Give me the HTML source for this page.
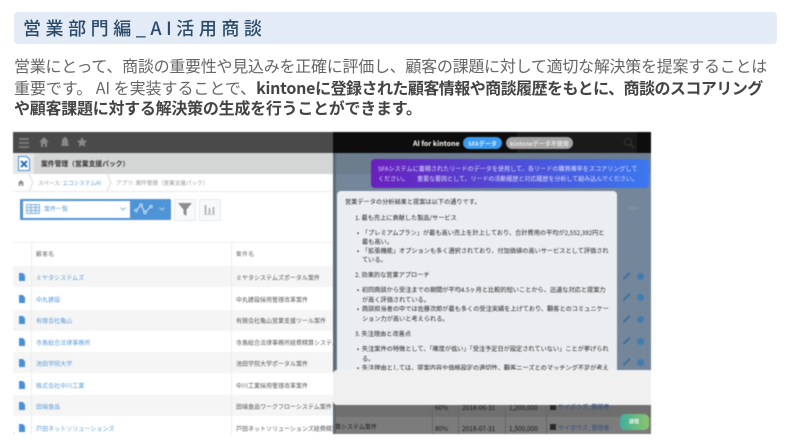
<!DOCTYPE html>
<html lang="ja"><head><meta charset="utf-8">
<style>
html,body{margin:0;padding:0;background:#fff;width:792px;height:440px;overflow:hidden}
body{position:relative;font-family:"Noto Sans CJK JP","Liberation Sans",sans-serif}
.a{position:absolute;white-space:nowrap}
.title{left:14px;top:12px;width:763px;height:32px;background:#e3ebf7;border-radius:4px}
.tt{left:23px;top:16px;font-size:18px;line-height:25px;letter-spacing:4.55px;color:#2b4a69;font-weight:500}
.p{left:14px;font-size:16px;line-height:22px;color:#666;letter-spacing:-.26px}
.p b{color:#444;font-weight:700}
#shot{position:absolute;left:13px;top:132px;width:638px;height:302px;overflow:hidden;background:#fff;filter:blur(.4px)}
#shot .a{line-height:10px}
#shot .a.c1,#shot .a.c2{line-height:11px}
#shot .a.card{line-height:12px}
.row{position:absolute;left:0;width:638px;height:21.4px}
.g{background:#f5f5f5}
.c1{left:23px;font-size:6px;color:#5a9bd8;letter-spacing:.05px}
.c2{left:223px;font-size:6px;color:#555}
.doc{position:absolute;left:6px;width:6px;height:8px;background:#4a90d6;clip-path:polygon(0 0,65% 0,100% 30%,100% 100%,0 100%)}
.card{font-size:6.2px;color:#222}
.ic{position:absolute;left:624px;width:7px;height:7px;border-radius:50%;background:#3f7cb5}
.pen{position:absolute;left:609px;width:9px;height:1.8px;background:#3f6f9c;transform:rotate(-45deg)}
</style></head><body>
<div class="a title"></div>
<div class="a tt">営業部門編_AI活用商談</div>
<div class="a p" style="top:54px">営業にとって、商談の重要性や見込みを正確に評価し、顧客の課題に対して適切な解決策を提案することは</div>
<div class="a p" style="top:76px"><span style="letter-spacing:-.04px">重要です。 AI を実装することで、</span><b>kintone<span style="letter-spacing:-.54px">に登録された顧客情報や商談履歴をもとに、商談のスコアリング</span></b></div>
<div class="a p" style="top:96px"><b>や顧客課題に対する解決策の生成を行うことができます。</b></div>
<div class="a" style="left:13px;top:432px;width:2px;height:2px;background:#aaa"></div>

<div id="shot">
 <div class="a" style="left:0;top:0;width:638px;height:21px;background:#4a4a4a"></div>
 <div class="a" style="left:6px;top:6px;width:10px;height:1.5px;background:#777"></div>
 <div class="a" style="left:6px;top:10px;width:10px;height:1.5px;background:#777"></div>
 <div class="a" style="left:6px;top:14px;width:10px;height:1.5px;background:#777"></div>
 <svg class="a" style="left:26px;top:4px" width="68" height="13" viewBox="0 0 68 13"><path d="M0 6 5 1l5 5H8v5H6V8H4v3H2V6z" fill="#888"/><path d="M22 10c1-2 1-3 1-5s2-4 3-4 3 2 3 4 0 3 1 5z" fill="#888"/><path d="M43 1l1.600 3.400 3.700.4-2.800 2.500.8 3.700L43 9l-3.300 2 .8-3.700-2.800-2.500 3.700-.4z" fill="#888"/></svg>

 <div class="a" style="left:0;top:21px;width:638px;height:21px;background:#d4d5d5"></div>
 <div class="a" style="left:0;top:21px;width:21px;height:21px;background:#e6e7e7"></div>
 <svg class="a" style="left:5px;top:24px" width="12" height="15" viewBox="0 0 12 15"><path d="M.5.500h8l3 3v11H.5z" fill="#fff" stroke="#4a90d6"/><path d="M3 5l6 6M9 5l-6 6" stroke="#2f6fb5" stroke-width="2"/></svg>
 <div class="a" style="left:28px;top:26px;font-size:6.800px;font-weight:700;color:#333">案件管理（営業支援パック）</div>

 <div class="a" style="left:0;top:59px;width:638px;height:1px;background:#e8eaea"></div>
 <svg class="a" style="left:5px;top:48px" width="6" height="6" viewBox="0 0 8 8"><path d="M0 4l4-4 4 4H7v4H5V5H3v3H1V4z" fill="#888"/></svg>
 <svg class="a" style="left:15px;top:42px" width="100" height="17" viewBox="0 0 100 17"><path d="M1 0l4 8.500-4 8.500M79 0l4 8.500-4 8.500" fill="none" stroke="#ddd"/></svg>
 <div class="a" style="left:25px;top:46px;font-size:5.600px;color:#999">スペース: <span style="color:#5a9bd8">エコシステムAI</span></div>
 <div class="a" style="left:103px;top:46px;font-size:5.600px;color:#999">アプリ: 案件管理（営業支援パック）</div>

 <div class="a" style="left:7px;top:67px;width:151px;height:21px;background:#4f94d6;border-radius:1px"></div>
 <div class="a" style="left:10px;top:69px;width:107px;height:17px;background:#fff"></div>
 <svg class="a" style="left:13px;top:72px" width="14" height="10" viewBox="0 0 14 10"><path d="M.5.500h13v9H.5zM.5 3.500h13M.5 6.500h13M5 .5v9M9.500.5v9" fill="#eaf2fa" stroke="#6aa3da" stroke-width=".7"/></svg>
 <div class="a" style="left:31px;top:72px;font-size:6px;color:#5a9bd8">案件一覧</div>
 <svg class="a" style="left:107px;top:75px" width="6" height="4" viewBox="0 0 6 4"><path d="M.5.500 3 3l2.500-2.500" fill="none" stroke="#8ab6e2"/></svg>
 <svg class="a" style="left:121px;top:71px" width="20" height="12" viewBox="0 0 20 12"><path d="M2 7.500 7 2l4 7.500 6-6" fill="none" stroke="#fff" stroke-width=".8"/><circle cx="2" cy="7.500" r="1.300" fill="#4f94d6" stroke="#fff" stroke-width=".7"/><circle cx="7" cy="2" r="1.300" fill="#4f94d6" stroke="#fff" stroke-width=".7"/><circle cx="11" cy="9.500" r="1.300" fill="#4f94d6" stroke="#fff" stroke-width=".7"/><circle cx="17" cy="3.500" r="1.300" fill="#4f94d6" stroke="#fff" stroke-width=".7"/></svg>
 <svg class="a" style="left:146px;top:75px" width="6" height="4" viewBox="0 0 6 4"><path d="M.5.500 3 3l2.500-2.500" fill="none" stroke="#b5d3ef"/></svg>
 <div class="a" style="left:161px;top:67px;width:20px;height:20px;background:#f7f9fa;border:1px solid #e9ecec"></div>
 <svg class="a" style="left:165px;top:70px" width="14" height="15" viewBox="0 0 14 15"><path d="M0 1h14L8.500 7.500V14l-3-2V7.500z" fill="#8d8d8d"/></svg>
 <div class="a" style="left:186px;top:67px;width:20px;height:20px;background:#f7f9fa;border:1px solid #e9ecec"></div>
 <svg class="a" style="left:191px;top:72px" width="11" height="11" viewBox="0 0 11 11"><path d="M1.500 1v9M5.500 4v6M9.500 3v7" stroke="#a5a5a5" stroke-width="1.500"/><path d="M0 10.500h11" stroke="#a5a5a5" stroke-width=".5"/></svg>

 <div class="a" style="left:0;top:110px;width:638px;height:1px;background:#eee"></div>
 <div class="a" style="left:18px;top:111px;width:1px;height:191px;background:#e9ecec"></div>
 <div class="a" style="left:218px;top:111px;width:1px;height:191px;background:#e9ecec"></div>
 <div class="a c2" style="left:23px;top:117px;font-size:5.600px;color:#666;letter-spacing:.6px">顧客名</div>
 <div class="a c2" style="top:117px;font-size:5.600px;color:#666;letter-spacing:.6px">案件名</div>

 <div class="row g" style="top:134px"></div>
 <div class="row g" style="top:177.500px;height:21.500px"></div>
 <div class="row g" style="top:220px"></div>
 <div class="row g" style="top:263px"></div>
 <div class="a" style="left:18px;top:134px;width:1px;height:168px;background:#e9ecec"></div>
 <div class="a" style="left:218px;top:134px;width:1px;height:168px;background:#e9ecec"></div>

 <div class="doc" style="top:141px"></div><div class="a c1" style="top:140px">ミヤタシステムズ</div><div class="a c2" style="top:140px">ミヤタシステムズポータル案件</div>
 <div class="doc" style="top:163px"></div><div class="a c1" style="top:162px">中丸建設</div><div class="a c2" style="top:162px">中丸建設採用管理改革案件</div>
 <div class="doc" style="top:184px"></div><div class="a c1" style="top:183px">有限会社亀山</div><div class="a c2" style="top:183px">有限会社亀山営業支援ツール案件</div>
 <div class="doc" style="top:206px"></div><div class="a c1" style="top:205px">寺島総合法律事務所</div><div class="a c2" style="top:205px">寺島総合法律事務所経費精算システム案件</div>
 <div class="doc" style="top:227px"></div><div class="a c1" style="top:226px">池田学院大学</div><div class="a c2" style="top:226px">池田学院大学ポータル案件</div>
 <div class="doc" style="top:249px"></div><div class="a c1" style="top:248px">株式会社中川工業</div><div class="a c2" style="top:248px">中川工業採用管理改革案件</div>
 <div class="doc" style="top:270px"></div><div class="a c1" style="top:269px">田端食品</div><div class="a c2" style="top:269px">田端食品ワークフローシステム案件</div>
 <div class="doc" style="top:292px"></div><div class="a c1" style="top:291px">戸田ネットソリューションズ</div><div class="a c2" style="top:291px">戸田ネットソリューションズ経費精算システム案件</div>

 <!-- overlay -->
 <div class="a" style="left:320px;top:0;width:318px;height:21px;background:#0d0d0d"></div>
 <div class="a" style="left:504px;top:0;width:120px;height:21px;background:#1a1a1a"></div>
 <div class="a" style="left:320px;top:21px;width:318px;height:251px;background:#74879a"></div>
 <div class="a" style="left:320px;top:21px;width:318px;height:21px;background:#6c7e8d"></div>
 <div class="a" style="left:320px;top:272px;width:318px;height:30px;background:#6f6f6f"></div>
 <div class="a" style="left:320px;top:285px;width:318px;height:17px;background:#7c7c7c"></div>
 <div class="a" style="left:320px;top:21px;width:3px;height:281px;background:#5f6a72"></div>

 <div class="a" style="left:400px;top:7px;font-size:7px;font-weight:700;color:#fff">AI for kintone</div>
 <div class="a" style="left:450px;top:5px;width:39px;height:12px;background:#3a9bf0;border-radius:6px"></div>
 <div class="a" style="left:455px;top:7px;font-size:6px;font-weight:700;color:#dbeeff">SFAデータ</div>
 <div class="a" style="left:493px;top:5px;width:67px;height:12px;background:#a3a3a3;border-radius:6px"></div>
 <div class="a" style="left:497px;top:7px;font-size:6px;font-weight:700;color:#e6e6e6">kintoneデータ不使用</div>
 <svg class="a" style="left:610px;top:5px" width="12" height="12" viewBox="0 0 12 12"><circle cx="5" cy="5" r="3.500" fill="none" stroke="#333" stroke-width="1.200"/><path d="M7.500 7.500 11 11" stroke="#333" stroke-width="1.500"/></svg>

 <div class="a" style="left:358px;top:27px;width:278px;height:29px;border-radius:4px;background:linear-gradient(90deg,#6a1fbe,#4a55dc 60%,#3b78f0)"></div>
 <div class="a" style="left:365px;top:32px;font-size:6.100px;color:#e0dcf8">SFAシステムに蓄積されたリードのデータを使用して、各リードの購買確率をスコアリングして</div>
 <div class="a" style="left:365px;top:42px;font-size:6.100px;color:#e0dcf8">ください。</div>
 <div class="a" style="left:404px;top:42px;font-size:6.100px;letter-spacing:-.1px;color:#e0dcf8">重要な要因として、リードの活動履歴と対応履歴を分析して組み込んでください。</div>

 <div class="a" style="left:324px;top:59px;width:280px;height:190px;background:#ebedf0;border-radius:4px"></div>
 <div class="a card" style="left:332px;top:64px">営業データの分析結果と提案は以下の通りです。</div>
 <div class="a card" style="left:342px;top:80px">1. 最も売上に貢献した製品/サービス</div>
 <div class="a card" style="left:344px;top:95px">•&nbsp;&nbsp;「プレミアムプラン」が最も高い売上を計上しており、合計費用の平均が2,552,392円と</div>
 <div class="a card" style="left:349px;top:104px">最も高い。</div>
 <div class="a card" style="left:344px;top:113px">•&nbsp;&nbsp;「拡張機能」オプションも多く選択されており、付加価値の高いサービスとして評価され</div>
 <div class="a card" style="left:349px;top:122px">ている。</div>
 <div class="a card" style="left:342px;top:137px">2. 効果的な営業アプローチ</div>
 <div class="a card" style="left:344px;top:152px">•&nbsp;&nbsp;初回商談から受注までの期間が平均4.5ヶ月と比較的短いことから、迅速な対応と提案力</div>
 <div class="a card" style="left:349px;top:162px">が高く評価されている。</div>
 <div class="a card" style="left:344px;top:171px">•&nbsp;&nbsp;商談担当者の中では佐藤次郎が最も多くの受注実績を上げており、顧客とのコミュニケー</div>
 <div class="a card" style="left:349px;top:181px">ション力が高いと考えられる。</div>
 <div class="a card" style="left:342px;top:196px">3. 失注理由と改善点</div>
 <div class="a card" style="left:344px;top:211px">•&nbsp;&nbsp;失注案件の特徴として、「確度が低い」「受注予定日が設定されていない」ことが挙げられ</div>
 <div class="a card" style="left:349px;top:221px">る。</div>
 <div class="a card" style="left:344px;top:229.500px">•&nbsp;&nbsp;失注理由としては、提案内容や価格設定の適切性、顧客ニーズとのマッチング不足が考え</div>

 <div class="a" style="left:616px;top:71px;font-size:7px;font-weight:700;color:#8d9aa6;letter-spacing:.5px">•••</div>

 <div class="pen" style="top:143px"></div><div class="ic" style="top:140.500px"></div>
 <div class="pen" style="top:164px"></div><div class="ic" style="top:161.500px"></div>
 <div class="pen" style="top:186px"></div><div class="ic" style="top:183.500px"></div>
 <div class="pen" style="top:208px"></div><div class="ic" style="top:205.500px"></div>
 <div class="pen" style="top:229px"></div><div class="ic" style="top:226.500px"></div>

 <div class="a" style="left:320px;top:238px;width:318px;height:35px;background:#f0f0f0;border-radius:4px 0 0 4px"></div>

 <div class="a" style="left:419px;top:273px;width:1px;height:29px;background:#666"></div>
 <div class="a" style="left:445px;top:273px;width:1px;height:29px;background:#666"></div>
 <div class="a" style="left:492px;top:273px;width:1px;height:29px;background:#666"></div>
 <div class="a" style="left:533px;top:273px;width:1px;height:29px;background:#666"></div>
 <div class="a" style="left:322px;top:290px;font-size:6px;color:#1c1c1c">算システム案件</div>
 <div class="a" style="left:422px;top:270px;font-size:6.500px;color:#1c1c1c">60%</div>
 <div class="a" style="left:449px;top:270px;font-size:6.500px;color:#1c1c1c">2018-06-31</div>
 <div class="a" style="left:496px;top:270px;font-size:6.500px;color:#1c1c1c">1,200,000</div>
 <div class="a" style="left:537px;top:273px;width:6px;height:5px;background:#2a2a2a"></div>
 <div class="a" style="left:545px;top:270px;font-size:6px;color:#2f4f7f">サイボウズ_管理者</div>
 <div class="a" style="left:422px;top:291px;font-size:6.500px;color:#1c1c1c">80%</div>
 <div class="a" style="left:449px;top:291px;font-size:6.500px;color:#1c1c1c">2018-07-31</div>
 <div class="a" style="left:496px;top:291px;font-size:6.500px;color:#1c1c1c">1,500,000</div>
 <div class="a" style="left:537px;top:292px;width:6px;height:6px;background:#2a2a2a"></div>
 <div class="a" style="left:545px;top:291px;font-size:6px;color:#2f4f7f">サイボウズ_管理者</div>

 <div class="a" style="left:607px;top:282px;width:29px;height:16px;border-radius:5px;background:linear-gradient(90deg,#3fae9c,#8cc46a)"></div>
 <div class="a" style="left:616px;top:285px;font-size:5px;font-weight:700;color:#fff">送信</div>
</div>
</body></html>
